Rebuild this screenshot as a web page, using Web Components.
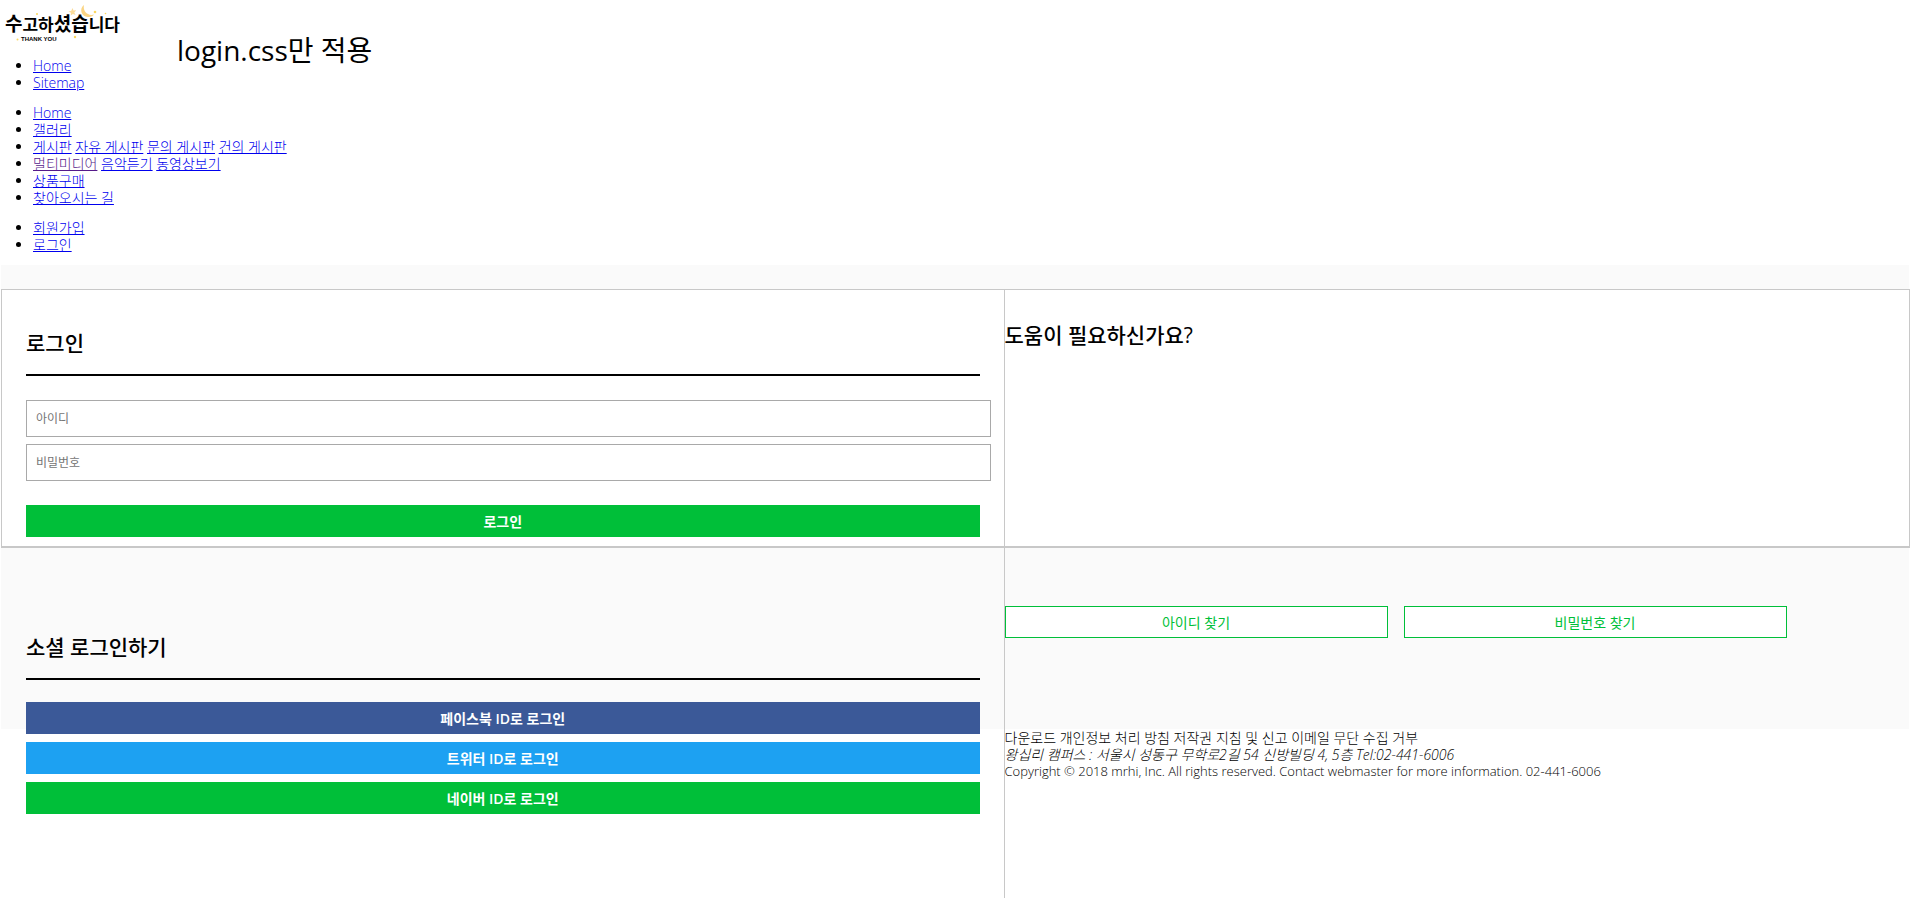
<!DOCTYPE html>
<html lang="ko">
<head>
<meta charset="utf-8">
<title>로그인</title>
<style>
body {
  margin: 0 5px 0 1px;
  background: #fff;
  color: #000;
  font: 300 14px/17px "Open Sans", "Noto Sans CJK KR", sans-serif;
}
.visited { color: #551a8b; }
</style>
</head>
<body>
<site-header>
  <site-logo slot="logo"></site-logo>
  <nav-list slot="nav" label="바로가기">
    <li><a href="#home">Home</a></li>
    <li><a href="#sitemap">Sitemap</a></li>
  </nav-list>
  <span slot="title">login.css만 적용</span>
</site-header>
<nav-list label="주 메뉴">
  <li><a href="#home">Home</a></li>
  <li><a href="#gallery">갤러리</a></li>
  <li><a href="#board">게시판</a> <a href="#free">자유 게시판</a> <a href="#qna">문의 게시판</a> <a href="#suggest">건의 게시판</a></li>
  <li><a class="visited" href="#media">멀티미디어</a> <a href="#music">음악듣기</a> <a href="#video">동영상보기</a></li>
  <li><a href="#shop">상품구매</a></li>
  <li><a href="#map">찾아오시는 길</a></li>
</nav-list>
<nav-list label="회원 메뉴">
  <li><a href="#join">회원가입</a></li>
  <li><a href="#login">로그인</a></li>
</nav-list>
<login-layout>
  <login-panel slot="login"></login-panel>
  <section-title slot="help">도움이 필요하신가요?</section-title>
  <social-panel slot="social"></social-panel>
  <action-button slot="find" kind="outline">아이디 찾기</action-button>
  <action-button slot="find" kind="outline">비밀번호 찾기</action-button>
  <site-footer slot="footer"></site-footer>
</login-layout>

<script>
function define(name, html) {
  const template = document.createElement('template');
  template.innerHTML = html;
  customElements.define(name, class extends HTMLElement {
    constructor() {
      super();
      this.attachShadow({ mode: 'open' }).append(template.content.cloneNode(true));
    }
    connectedCallback() {
      const nav = this.shadowRoot.querySelector('nav');
      if (nav) nav.setAttribute('aria-label', this.getAttribute('label'));
    }
  });
}

define('site-logo', `
<style>
:host { display: block; }
svg { display: block; }
.word { font: 700 17px "Noto Sans CJK KR", sans-serif; }
.big { font-size: 19px; }
.sub { font: 700 6px "Liberation Sans", sans-serif; }
</style>
<svg width="124" height="44" viewBox="0 0 124 44" role="img" aria-label="수고하셨습니다 THANK YOU">
  <text class="word" x="4" y="31"><tspan class="big">수</tspan>고하<tspan class="big">셨습</tspan>니다</text>
  <text class="sub" x="20" y="41">THANK YOU</text>
  <path d="M83 5C78 8.500 80 16.500 87 17C90 17.200 92 16 93 14.500C87 16.500 81.500 11 83 5Z" fill="#fad584"/>
  <path d="M71.500 8l1 2.600 2.700-.3-1.900 2.100 1.300 2.500-2.700-1-2.200 1.700.2-2.800-2.400-1.400 2.800-.6z" fill="#fbdc9a"/>
  <g fill="#fbd75e"><circle cx="94" cy="12" r="1.300"/><circle cx="36" cy="14" r="1"/><circle cx="104.500" cy="13.500" r=".8"/><circle cx="74" cy="37" r="1.200"/><circle cx="16.500" cy="39.500" r="1"/></g>
</svg>`);

define('site-header', `
<style>
:host { display: flex; gap: 52px; }
.title { font-size: 28px; font-weight: 400; line-height: 36px; padding-top: 32px; }
</style>
<div><slot name="logo"></slot><slot name="nav"></slot></div>
<div class="title"><slot name="title"></slot></div>`);

define('nav-list', `
<style>
:host { display: block; }
ul { margin: 13px 0 0; padding: 0 0 0 32px; }
</style>
<nav><ul><slot></slot></ul></nav>`);

define('section-title', `
<style>
:host { display: block; }
h2 { margin: 0; font-size: 21px; line-height: 28px; font-weight: 500; }
:host([ruled]) h2 { padding-bottom: 17px; border-bottom: 2px solid #000; }
</style>
<h2><slot></slot></h2>`);

define('action-button', `
<style>
:host { display: block; }
button {
  display: block; width: 100%; height: 32px; margin: 0; padding: 0;
  border: 1px solid var(--tone, #00bf39); border-radius: 0;
  background: var(--tone, #00bf39); color: #fff;
  font: inherit; font-weight: 600; cursor: pointer;
}
:host([kind=facebook]) { --tone: #3b5998; }
:host([kind=twitter]) { --tone: #1da1f2; }
:host([kind=outline]) button { background: #fff; color: #00bf39; font-weight: 400; }
</style>
<button type="button"><slot></slot></button>`);

define('login-panel', `
<style>
:host { display: block; }
form { margin: 24px 0 0; }
input {
  display: block; box-sizing: content-box; width: 100%; height: 35px;
  margin: 0 0 7px; padding: 0 0 0 9px; border: 1px solid #a9a9a9; border-radius: 0;
  background: #fff; font: inherit; font-size: 12px; font-weight: 400;
}
input::placeholder { color: #757575; }
action-button { margin-top: 24px; }
</style>
<section-title ruled>로그인</section-title>
<form>
  <input type="text" aria-label="아이디" placeholder="아이디">
  <input type="password" aria-label="비밀번호" placeholder="비밀번호">
  <action-button>로그인</action-button>
</form>`);

define('social-panel', `
<style>
:host { display: block; }
div { display: grid; gap: 8px; margin-top: 22px; }
</style>
<section-title ruled>소셜 로그인하기</section-title>
<div>
  <action-button kind="facebook">페이스북 ID로 로그인</action-button>
  <action-button kind="twitter">트위터 ID로 로그인</action-button>
  <action-button>네이버 ID로 로그인</action-button>
</div>`);

define('site-footer', `
<style>
:host { display: block; }
p, address { margin: 0; }
.copyright { font-size: 13px; }
</style>
<footer>
  <p>다운로드 개인정보 처리 방침 저작권 지침 및 신고 이메일 무단 수집 거부</p>
  <address>왕십리 캠퍼스 : 서울시 성동구 무학로2길 54 신방빌딩 4, 5층 Tel:02-441-6006</address>
  <p class="copyright">Copyright © 2018 mrhi, Inc. All rights reserved. Contact webmaster for more information. 02-441-6006</p>
</footer>`);

define('login-layout', `
<style>
:host {
  display: grid; margin-top: 12px;
  grid-template-columns: calc(50% + 49px) 1fr;
  grid-template-rows: auto auto 1fr;
}
.band { grid-area: 1 / 1 / 3 / 3; margin-right: 1px; background: #fafafa; }
.login, .help { margin-top: 24px; background: #fff; border: 1px solid #c8c8c8; border-bottom-width: 2px; }
.login { grid-area: 1 / 1; padding: 39px 24px 9px; }
.help { grid-area: 1 / 2; border-left: 0; padding-top: 31px; }
.social { grid-area: 2 / 1 / 4 / 2; padding: 85px 24px 84px 25px; border-right: 1px solid #c8c8c8; }
.find { grid-area: 2 / 2; display: grid; grid-template-columns: 20vw 20vw; gap: 16px; padding: 58px 0 91px; }
.footer { grid-area: 3 / 2; }
</style>
<div class="band"></div>
<div class="login"><slot name="login"></slot></div>
<div class="help"><slot name="help"></slot></div>
<div class="social"><slot name="social"></slot></div>
<div class="find"><slot name="find"></slot></div>
<div class="footer"><slot name="footer"></slot></div>`);
</script>
</body>
</html>
